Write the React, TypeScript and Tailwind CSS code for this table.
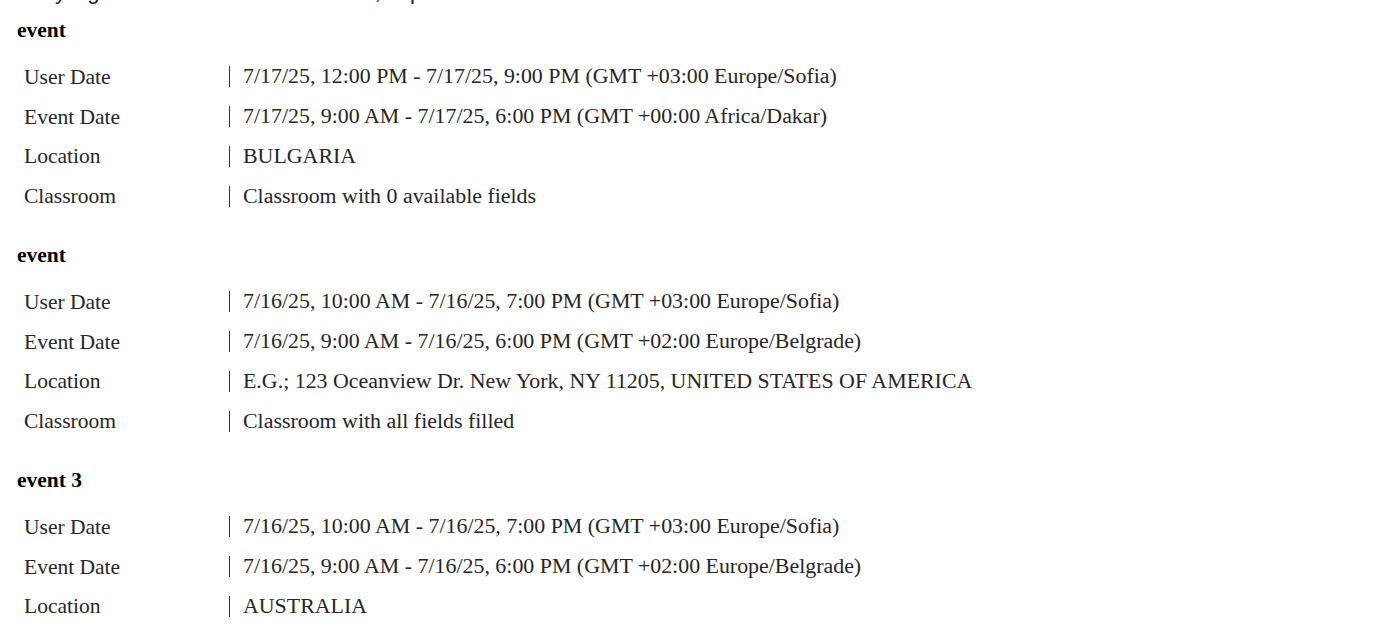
import React from 'react'

type Row = { label: string; value: string }
type Event = { title: string; rows: Row[] }

const events: Event[] = [
  {
    title: 'event',
    rows: [
      { label: 'User Date', value: '7/17/25, 12:00 PM - 7/17/25, 9:00 PM (GMT +03:00 Europe/Sofia)' },
      { label: 'Event Date', value: '7/17/25, 9:00 AM - 7/17/25, 6:00 PM (GMT +00:00 Africa/Dakar)' },
      { label: 'Location', value: 'BULGARIA' },
      { label: 'Classroom', value: 'Classroom with 0 available fields' },
    ],
  },
  {
    title: 'event',
    rows: [
      { label: 'User Date', value: '7/16/25, 10:00 AM - 7/16/25, 7:00 PM (GMT +03:00 Europe/Sofia)' },
      { label: 'Event Date', value: '7/16/25, 9:00 AM - 7/16/25, 6:00 PM (GMT +02:00 Europe/Belgrade)' },
      { label: 'Location', value: 'E.G.; 123 Oceanview Dr. New York, NY 11205, UNITED STATES OF AMERICA' },
      { label: 'Classroom', value: 'Classroom with all fields filled' },
    ],
  },
  {
    title: 'event 3',
    rows: [
      { label: 'User Date', value: '7/16/25, 10:00 AM - 7/16/25, 7:00 PM (GMT +03:00 Europe/Sofia)' },
      { label: 'Event Date', value: '7/16/25, 9:00 AM - 7/16/25, 6:00 PM (GMT +02:00 Europe/Belgrade)' },
      { label: 'Location', value: 'AUSTRALIA' },
    ],
  },
]

function EventBlock({ event }: { event: Event }) {
  return (
    <div className="mb-[25px]">
      <h3 className="h-[28px] leading-[28px] pl-[17px] text-[21.5px] font-bold text-black">
        {event.title}
      </h3>
      <div className="mt-[13px]">
        {event.rows.map((row, i) => (
          <div key={i} className="flex items-center h-[39.75px] pl-[24px]">
            <div className="w-[205px] shrink-0 text-[21.5px] text-[#262626]">{row.label}</div>
            <div className="border-l border-[#333] h-[21px] pl-[13px] flex items-center text-[21.9px] text-[#262626] whitespace-nowrap">
              {row.value}
            </div>
          </div>
        ))}
      </div>
    </div>
  )
}

export default function App() {
  return (
    <div className="h-[638px] w-[1382px] overflow-hidden bg-white [font-family:'Liberation_Serif','Times_New_Roman',serif]">
      {/* page title above, scrolled mostly out of view */}
      <div className="-mt-[22px] h-[28px] pl-[17px] text-[22px] leading-[28px] text-[#222] whitespace-nowrap [font-family:'Liberation_Sans',Arial,sans-serif]">
        Mary's guide to the latest events and, in part
      </div>
      <div className="pt-[10px]">
        {events.map((ev, i) => (
          <EventBlock key={i} event={ev} />
        ))}
      </div>
    </div>
  )
}
